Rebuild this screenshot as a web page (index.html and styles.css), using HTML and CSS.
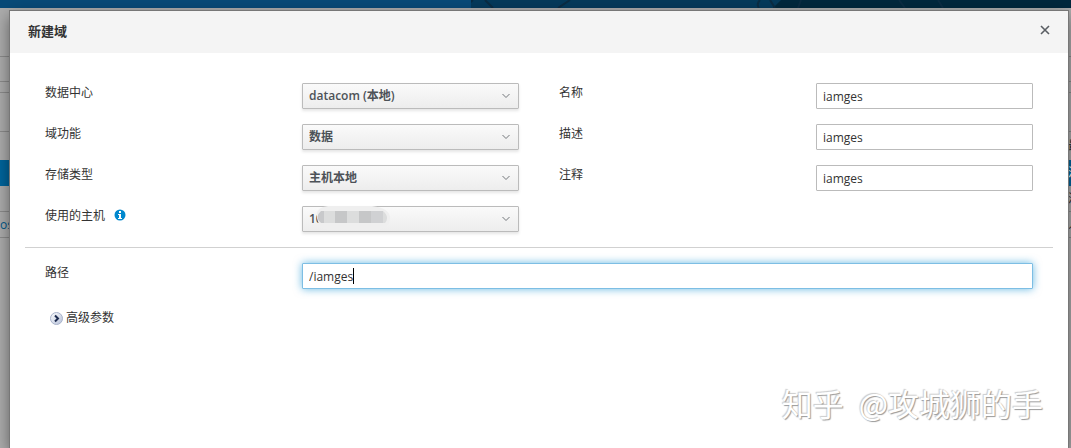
FILE: index.html
```html
<!DOCTYPE html>
<html lang="zh-CN">
<head>
  <meta charset="UTF-8">
  <meta name="viewport" content="width=device-width, initial-scale=1.0">
  <title>新建域</title>
  <link rel="stylesheet" href="styles.css">
</head>
<body>
  <div class="page" aria-hidden="true">
    <div class="masthead">
      <svg width="600" height="8" viewBox="0 0 600 8">
        <path d="M0 0H600V8H-10z" fill="#053a5b"/>
        <path d="M310 0H600V8H302z" fill="#02283d"/>
        <path d="M2 0L-8 8M14 0l8 8M99 0l-12 8M289 0q-4 4-1 8M299 0l5 8M330 0l-3 8M428 0l6 8M467 0l5 8" fill="none" stroke="#0b2c43" stroke-width="2"/>
      </svg>
    </div>
    <div class="band band-title"></div>
    <div class="band band-tabs"></div>
    <div class="band band-gap"></div>
    <div class="band band-tools"></div>
    <div class="band band-head"><span></span><span class="cut">最</span></div>
    <div class="band band-selected"><span></span><span class="cut">活</span></div>
    <div class="band band-row"><span></span><span class="cut">活</span></div>
    <div class="band band-row"><span class="host">os</span><span class="cut">人</span></div>
  </div>

  <div class="dialog" role="dialog" aria-labelledby="title">
    <header class="dialog-header">
      <h1 id="title">新建域</h1>
      <button class="close" type="button" aria-label="关闭">
        <svg width="10" height="10" viewBox="0 0 10 10"><path d="M1 1l8 8M9 1L1 9" stroke="#5a5e63" stroke-width="1.6"/></svg>
      </button>
    </header>

    <form class="dialog-body">
      <div class="columns">
        <div class="column">
          <div class="field">
            <label for="dc">数据中心</label>
            <div class="select">
              <select id="dc"><option>datacom (本地)</option></select>
              <svg class="chevron" width="8" height="6" viewBox="0 0 8 6"><path d="M.5 1L4 4.5 7.5 1"/></svg>
            </div>
          </div>
          <div class="field">
            <label for="function">域功能</label>
            <div class="select">
              <select id="function"><option>数据</option></select>
              <svg class="chevron" width="8" height="6" viewBox="0 0 8 6"><path d="M.5 1L4 4.5 7.5 1"/></svg>
            </div>
          </div>
          <div class="field">
            <label for="storage">存储类型</label>
            <div class="select">
              <select id="storage"><option>主机本地</option></select>
              <svg class="chevron" width="8" height="6" viewBox="0 0 8 6"><path d="M.5 1L4 4.5 7.5 1"/></svg>
            </div>
          </div>
          <div class="field">
            <label for="host">使用的主机
              <svg class="info" width="12" height="12" viewBox="0 0 12 12">
                <circle cx="6" cy="6" r="5.5" fill="#0088ce"/>
                <path d="M5 2h2v2H5zM4 5h3v4h1v1H4V9h1V6H4z" fill="#fff"/>
              </svg>
            </label>
            <div class="select">
              <select id="host"><option>10</option></select>
              <svg class="chevron" width="8" height="6" viewBox="0 0 8 6"><path d="M.5 1L4 4.5 7.5 1"/></svg>
              <svg class="mask" width="74" height="25" viewBox="0 0 74 25">
                <path d="M12 0H56Q74 2 74 12T62 24H12Q3 23 1 12T12 0z" fill="#efefef"/>
                <path d="M7 5H67Q74 11 69 17H7Q-2 11 7 5z" fill="#dcdddd"/>
                <path d="M5 5h3v12H5Q-2 11 5 5z" fill="#c8c9cb"/>
                <path d="M19 5h12v12H19zM43 5h12v12H43z" fill="#c6c7c8"/>
                <path d="M55 5h12v12H55z" fill="#d0d1d3"/>
              </svg>
            </div>
          </div>
        </div>

        <div class="column">
          <div class="field">
            <label for="name">名称</label>
            <input id="name" type="text" value="iamges">
          </div>
          <div class="field">
            <label for="description">描述</label>
            <input id="description" type="text" value="iamges">
          </div>
          <div class="field">
            <label for="comment">注释</label>
            <input id="comment" type="text" value="iamges">
          </div>
        </div>
      </div>

      <div class="path">
        <div class="field field-wide">
          <label for="path">路径</label>
          <div class="active">
            <input id="path" type="text" value="/iamges">
            <span class="caret"></span>
          </div>
        </div>
      </div>

      <button class="advanced" type="button">
        <svg width="13" height="13" viewBox="0 0 13 13">
          <defs>
            <linearGradient id="ball" x1="0" y1="0" x2="1" y2="1">
              <stop offset="0" stop-color="#fff"/>
              <stop offset="1" stop-color="#b4bfd8"/>
            </linearGradient>
          </defs>
          <circle cx="6.5" cy="6.5" r="6" fill="url(#ball)" stroke="#a8b2ca"/>
          <path d="M5 3.5l3 3-3 3" fill="none" stroke="#1d2c50" stroke-width="2"/>
        </svg>
        <span>高级参数</span>
      </button>
    </form>
  </div>

  <div class="watermark"><span>知乎</span><span>@攻城狮的手</span></div>
</body>
</html>
```
FILE: styles.css
```css
* {
  box-sizing: border-box;
}

body {
  margin: 0;
  min-height: 100vh;
  position: relative;
  overflow: hidden;
  background: #acacac;
  color: #333;
  font: 12px/20px "Open Sans", "Noto Sans CJK SC", sans-serif;
}

/* page behind the dialog */
.masthead {
  height: 8px;
  display: flex;
  justify-content: flex-end;
  background: #084a78;
}

.band {
  display: flex;
  align-items: center;
  justify-content: space-between;
  border-bottom: 1px solid #8b8b8b;
}

.band-title { height: 49px; }
.band-tabs { height: 25px; }
.band-gap { height: 11px; }
.band-tools { height: 39px; }
.band-head { height: 28px; border: 0; }
.band-row { height: 26px; }

.band-selected {
  height: 26px;
  border: 0;
  background: #00659c;
  color: #fff;
}

.cut {
  width: 3px;
  overflow: hidden;
  white-space: nowrap;
}

.host {
  width: 10px;
  color: #00598a;
}

/* dialog */
.dialog {
  position: absolute;
  top: 11px;
  right: 3px;
  bottom: 0;
  left: 10px;
  background: #fff;
  box-shadow: 0 0 0 1px #777, 0 5px 15px rgba(0, 0, 0, .5);
}

.dialog-header {
  display: flex;
  align-items: center;
  justify-content: space-between;
  height: 42px;
  padding: 0 18px 2px;
  background: #f4f4f4;
}

.dialog-header h1 {
  margin: 0;
  font-size: 13px;
  font-weight: 600;
}

button {
  display: flex;
  align-items: center;
  padding: 0;
  border: 0;
  background: none;
  color: inherit;
  font: inherit;
}

.close {
  padding-bottom: 2px;
}

.dialog-body {
  padding: 30px 15px;
}

.columns {
  display: grid;
  grid-template-columns: 1fr 1fr;
  gap: 40px;
  padding: 0 20px 15px;
}

.column {
  display: flex;
  flex-direction: column;
  gap: 15px;
}

.field {
  display: grid;
  grid-template-columns: 1fr 217px;
  align-items: start;
}

.field-wide {
  grid-template-columns: 257px 1fr;
}

.info {
  margin-left: 6px;
  vertical-align: -1px;
}

input,
select {
  display: block;
  width: 100%;
  height: 26px;
  margin: 0;
  padding: 0 6px;
  border: 1px solid #bbb;
  border-radius: 1px;
  background: #fff;
  color: #333;
  font: inherit;
}

.select,
.active {
  position: relative;
}

select {
  appearance: none;
  background: linear-gradient(#fafafa, #ededed);
  box-shadow: 0 2px 3px rgba(3, 3, 3, .1);
  color: #4d5258;
  font-weight: 600;
}

.chevron {
  position: absolute;
  top: 10px;
  right: 9px;
  fill: none;
  stroke: #72767b;
}

.mask {
  position: absolute;
  top: 0;
  left: 14px;
}

.path {
  padding: 15px 20px;
  border-top: 1px solid #d1d1d1;
}

.active input {
  border-color: #7dbee4;
  box-shadow: 0 0 8px rgba(0, 136, 206, .6);
}

.caret {
  position: absolute;
  top: 5px;
  left: 51px;
  width: 1px;
  height: 16px;
  background: #000;
}

.advanced {
  gap: 3px;
  margin: 4px 0 0 25px;
}

.watermark {
  position: absolute;
  right: 28px;
  bottom: 22px;
  display: flex;
  gap: 15px;
  color: #fff;
  font: 31px/46px "Noto Sans CJK SC", sans-serif;
  text-shadow: 1px 1px 1px #999, -1px -1px 1px #ccc;
}
```
